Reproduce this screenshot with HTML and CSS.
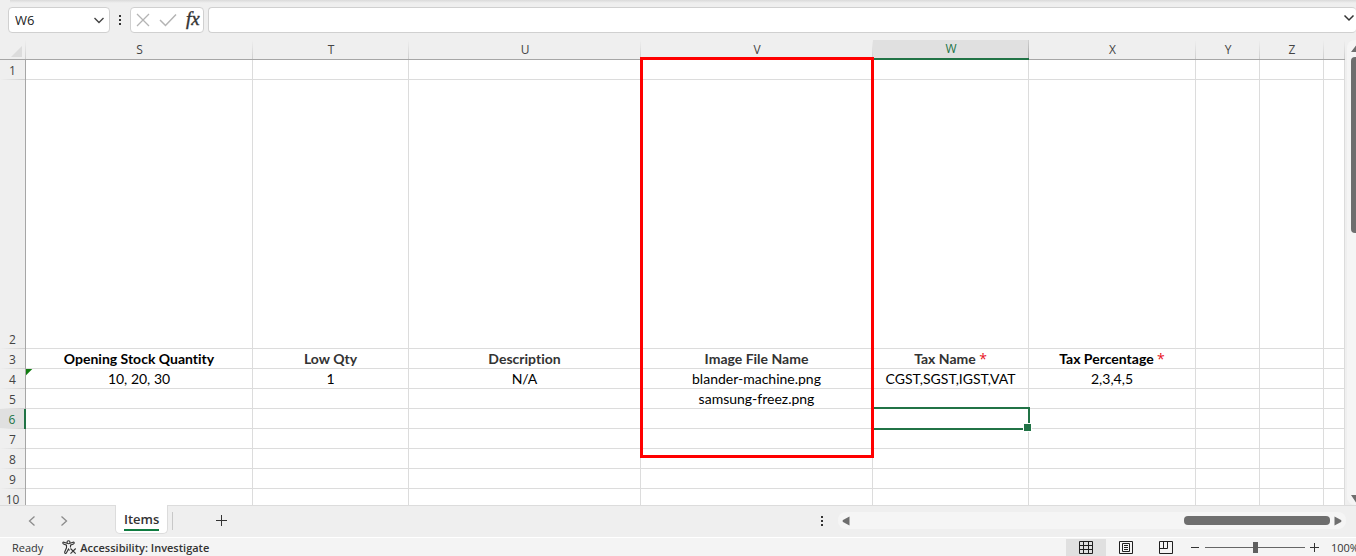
FILE: index.html
```html
<!DOCTYPE html>
<html lang="en">
<head>
<meta charset="utf-8">
<title>Items</title>
<link rel="stylesheet" href="styles.css">
</head>
<body>
<div class="app">
  <div class="ribbon-edge"></div>
  <div class="formula-bar">
    <div class="name-box">
      <input class="name-input" type="text" value="W6" aria-label="Name box">
      <button class="bare" aria-label="Show names"><svg width="12" height="8" viewBox="0 0 12 8" fill="none" stroke="#444" stroke-width="1.4"><path d="M1.500 2 6 6.500l4.500-4.500"/></svg></button>
    </div>
    <svg class="grip" width="4" height="12" viewBox="0 0 4 12" fill="#333"><path d="M1 1h2v2H1zM1 5h2v2H1zM1 9h2v2H1z"/></svg>
    <div class="entry-tools">
      <button class="bare" aria-label="Cancel"><svg width="14" height="14" viewBox="0 0 14 14" fill="none" stroke="#b4b4b4" stroke-width="1.300"><path d="M1 1l12 12M13 1 1 13"/></svg></button>
      <button class="bare" aria-label="Enter"><svg width="18" height="14" viewBox="0 0 18 14" fill="none" stroke="#b4b4b4" stroke-width="1.500"><path d="M1 7l5.500 5.500L17 1.500"/></svg></button>
      <button class="bare fx" aria-label="Insert function">fx</button>
    </div>
    <div class="formula-box">
      <input class="formula-input" type="text" aria-label="Formula bar">
      <button class="bare" aria-label="Expand formula bar"><svg width="12" height="8" viewBox="0 0 12 8" fill="none" stroke="#333" stroke-width="1.500"><path d="M1.500 1.500 6 6l4.500-4.500"/></svg></button>
    </div>
  </div>

  <div class="workspace">
    <div class="sheet">
      <table class="grid">
        <colgroup><col class="c-head"><col class="c-s"><col class="c-md"><col class="c-lg"><col class="c-lg"><col class="c-md"><col class="c-x"><col class="c-sm"><col class="c-sm"><col></colgroup>
        <thead>
          <tr>
            <th class="corner"><svg width="11" height="11" viewBox="0 0 11 11" fill="#dcdcdc"><path d="M11 0v11H0z"/></svg></th>
            <th>S</th><th>T</th><th>U</th><th class="marked">V<div class="highlight"></div></th><th class="active">W</th><th>X</th><th>Y</th><th>Z</th><th></th>
          </tr>
        </thead>
        <tbody>
          <tr><th>1</th><td></td><td></td><td></td><td></td><td></td><td></td><td></td><td></td><td></td></tr>
          <tr class="tall"><th>2</th><td></td><td></td><td></td><td></td><td></td><td></td><td></td><td></td><td></td></tr>
          <tr class="titles"><th>3</th><td class="dark">Opening Stock Quantity</td><td>Low Qty</td><td>Description</td><td>Image File Name</td><td>Tax Name <span class="req">*</span></td><td class="dark">Tax Percentage <span class="req">*</span></td><td></td><td></td><td></td></tr>
          <tr><th>4</th><td class="flagged">10, 20, 30</td><td>1</td><td>N/A</td><td>blander-machine.png</td><td>CGST,SGST,IGST,VAT</td><td>2,3,4,5</td><td></td><td></td><td></td></tr>
          <tr><th>5</th><td></td><td></td><td></td><td>samsung-freez.png</td><td></td><td></td><td></td><td></td><td></td></tr>
          <tr><th class="active">6</th><td></td><td></td><td></td><td></td><td class="selected"><div class="cursor"></div></td><td></td><td></td><td></td><td></td></tr>
          <tr><th>7</th><td></td><td></td><td></td><td></td><td></td><td></td><td></td><td></td><td></td></tr>
          <tr><th>8</th><td></td><td></td><td></td><td></td><td></td><td></td><td></td><td></td><td></td></tr>
          <tr><th>9</th><td></td><td></td><td></td><td></td><td></td><td></td><td></td><td></td><td></td></tr>
          <tr><th>10</th><td></td><td></td><td></td><td></td><td></td><td></td><td></td><td></td><td></td></tr>
        </tbody>
      </table>
    </div>
    <div class="v-scroll">
      <svg width="12" height="8" viewBox="0 0 12 8" fill="#6e6e6e"><path d="M6 0q.6 0 1 .6L12 7H0L5 .6Q5.400 0 6 0z"/></svg>
      <div class="v-thumb"></div>
      <svg width="12" height="8" viewBox="0 0 12 8" fill="#6e6e6e"><path d="M6 8q.6 0 1-.6L12 0H0l5 7.400Q5.400 8 6 8z"/></svg>
    </div>
  </div>

  <div class="tab-strip">
    <button class="bare nav" aria-label="Previous sheet"><svg width="8" height="10" viewBox="0 0 8 10" fill="none" stroke="#8c8c8c" stroke-width="1.300"><path d="M6.500.5 1.500 5l5 4.500"/></svg></button>
    <button class="bare nav" aria-label="Next sheet"><svg width="8" height="10" viewBox="0 0 8 10" fill="none" stroke="#8c8c8c" stroke-width="1.300"><path d="M1.500.5l5 4.500-5 4.500"/></svg></button>
    <button class="tab"><span class="tab-name">Items</span></button>
    <div class="divider"></div>
    <button class="bare add" aria-label="New sheet"><svg width="11" height="11" viewBox="0 0 11 11" fill="#333"><path d="M5 0h1v5h5v1H6v5H5V6H0V5h5z"/></svg></button>
    <div class="h-area">
      <svg width="4" height="12" viewBox="0 0 4 12" fill="#333"><path d="M1 1h2v2H1zM1 5h2v2H1zM1 9h2v2H1z"/></svg>
      <div class="h-scroll">
        <svg width="8" height="10" viewBox="0 0 8 10" fill="#6e6e6e"><path d="M7.500.5v9L1 6Q0 5 1 4z"/></svg>
        <div class="h-thumb"></div>
        <svg width="8" height="10" viewBox="0 0 8 10" fill="#6e6e6e"><path d="M.5.5v9L7 6q1-1 0-2z"/></svg>
      </div>
    </div>
  </div>

  <div class="status-bar">
    <span class="ready">Ready</span>
    <button class="bare access">
      <svg width="15" height="15" viewBox="0 0 15 15" fill="none" stroke="#333" stroke-width="1.100"><circle cx="6.500" cy="2.300" r="1.500"/><path d="M5 3.300 2 2.200Q.8 2 .8 3q0 .6.800 1L4.500 5.200v2.600L2.700 12q-.3 1.200.6 1.500.8.200 1.200-.7L6.500 9l1 1.500M8 3.300l3-1.100q1.200-.2 1.200.8 0 .6-.8 1L8.500 5.200v2.300M8.500 8.500l5.200 5.200M13.700 8.500l-5.200 5.200"/></svg>
      <span>Accessibility: Investigate</span>
    </button>
    <div class="view-tools">
      <button class="bare view on" aria-label="Normal"><svg width="14" height="14" viewBox="0 0 14 14" fill="none" stroke="#1f1f1f"><path d="M.5.5h13v12H.5zM4.500.5v12M9.500.5v12M.5 4.500h13M.5 8.500h13"/></svg></button>
      <button class="bare view" aria-label="Page layout"><svg width="14" height="14" viewBox="0 0 14 14" fill="none" stroke="#1f1f1f"><path d="M.5.5h13v12H.5zM3.500 2.500h7v8h-7zM5 4.500h4M5 6.500h4M5 8.500h4"/></svg></button>
      <button class="bare view" aria-label="Page break preview"><svg width="14" height="14" viewBox="0 0 14 14" fill="none" stroke="#1f1f1f"><path d="M.5.5h13v12H.5zM.5 7.500h8v-7M4.500.5v7"/></svg></button>
      <button class="bare step" aria-label="Zoom out"><svg width="9" height="9" viewBox="0 0 9 9" fill="#333"><path d="M0 4h8v1H0z"/></svg></button>
      <input class="zoom" type="range" min="10" max="190" value="100" aria-label="Zoom">
      <button class="bare step" aria-label="Zoom in"><svg width="9" height="9" viewBox="0 0 9 9" fill="#333"><path d="M4 0h1v4h4v1H5v4H4V5H0V4h4z"/></svg></button>
      <span class="percent">100%</span>
    </div>
  </div>
</div>
</body>
</html>
```
FILE: styles.css
```css
* { box-sizing: border-box; }

body {
  margin: 0;
  font: 12px/16px "Open Sans", "Noto Sans", sans-serif;
  color: #333;
  background: #efefef;
}

.app {
  display: flex;
  flex-direction: column;
  height: 100vh;
  overflow: hidden;
}

svg { display: block; flex: none; }

.bare {
  display: flex;
  align-items: center;
  justify-content: center;
  padding: 0;
  border: 0;
  background: none;
  color: inherit;
  font: inherit;
}

/* Formula bar */
.ribbon-edge {
  flex: none;
  height: 3px;
  margin-left: 10px;
  background: linear-gradient(#dadada, #efefef);
}

.formula-bar {
  display: flex;
  flex: none;
  align-items: center;
  padding: 4px 0 7px 8px;
}

.name-box,
.entry-tools,
.formula-box {
  display: flex;
  align-items: center;
  height: 26px;
  border: 1px solid #d0d0d0;
  border-radius: 4px;
  background: #fff;
}

.name-box { width: 102px; padding: 0 4px 0 6px; }

.name-input,
.formula-input {
  flex: 1;
  min-width: 0;
  padding: 0;
  border: 0;
  outline: 0;
  background: none;
  color: #222;
  font: inherit;
  font-size: 13px;
}

.grip { margin: 0 8px; }

.entry-tools { gap: 9px; width: 74px; padding: 0 5px; }

.fx {
  padding-bottom: 3px;
  font: italic 19px/20px "Liberation Serif", serif;
  -webkit-text-stroke: 0.4px #333;
}

.formula-box {
  flex: 1;
  margin-left: 4px;
  padding: 0 1px 4px 8px;
  border-right: 0;
}

/* Grid */
.workspace {
  display: flex;
  flex: 1;
  min-height: 0;
}

.sheet {
  flex: 1;
  min-width: 0;
  overflow: hidden;
}

.grid {
  width: 100%;
  table-layout: fixed;
  border-spacing: 0;
}

.c-head { width: 26px; }
.c-s { width: 227px; }
.c-md { width: 156px; }
.c-lg { width: 232px; }
.c-x { width: 167px; }
.c-sm { width: 64px; }

.grid tr { height: 20px; }
.grid .tall { height: 269px; }

.grid td {
  padding: 0;
  border-right: 1px solid #dcdcdc;
  border-bottom: 1px solid #dcdcdc;
  background: #fff;
  color: #000;
  font: 14px/19px Lato, sans-serif;
  font-variant-ligatures: none;
  text-align: center;
  white-space: nowrap;
}

.grid th {
  padding: 0;
  color: #444;
  font-weight: 400;
  line-height: 19px;
}

.grid thead th {
  border-bottom: 1px solid #a6a6a6;
  background: linear-gradient(#efefef, #cfcfcf) right / 1px 100% no-repeat #efefef;
}

.grid tbody th {
  border-right: 1px solid #a6a6a6;
  background: linear-gradient(90deg, #efefef, #cfcfcf) bottom / 100% 1px no-repeat #efefef;
  vertical-align: bottom;
}

.grid .corner svg { margin: 3px 0 0 11px; }

.grid thead .active {
  border-bottom: 2px solid #217346;
  background: linear-gradient(#d0d0d0, #a6a6a6) right / 1px 100% no-repeat #e0e0e0;
  color: #217346;
  line-height: 18px;
}

.grid tbody .active {
  border-right: 2px solid #217346;
  background-color: #e0e0e0;
  color: #217346;
}

.grid .titles td { color: #333; font-weight: 700; }
.grid .titles .dark { color: #000; }
.req { color: #e81123; font-family: "Open Sans", sans-serif; font-weight: 400; }

.grid .flagged {
  background: linear-gradient(135deg, #107c10 4px, transparent 5px) #fff;
}

.marked,
.selected { position: relative; }

.highlight {
  position: absolute;
  z-index: 2;
  top: 17px;
  left: -1px;
  right: -1px;
  height: 401px;
  border: 3px solid #f00;
}

.cursor {
  position: absolute;
  z-index: 1;
  top: -2px;
  left: -2px;
  right: -2px;
  bottom: -2px;
  border: 2px solid #217346;
}

.cursor::after {
  content: "";
  position: absolute;
  right: -4px;
  bottom: -4px;
  width: 7px;
  height: 7px;
  border: 1px solid #fff;
  background: #217346;
}

/* Scroll bars */
.v-scroll {
  display: flex;
  flex: none;
  flex-direction: column;
  width: 9px;
  margin-left: 2px;
  padding: 5px 0 2px 4px;
  border-radius: 8px 0 0 8px;
  background: #f5f5f5;
  overflow: hidden;
}

.v-thumb {
  width: 9px;
  height: 176px;
  margin: 4px 0 auto;
  border-radius: 4px;
  background: #6e6e6e;
}

.tab-strip {
  display: flex;
  flex: none;
  align-items: center;
  height: 32px;
  padding: 0 10px 2px 16px;
  border-top: 1px solid #dcdcdc;
}

.nav { width: 32px; height: 24px; }

.tab {
  align-self: flex-start;
  height: 29px;
  margin: -1px 0 0 35px;
  padding: 4px 8px 0;
  border: 1px solid #dcdcdc;
  border-top: 0;
  border-radius: 0 0 5px 5px;
  background: #fff;
  color: #333;
  font: 600 13px/16px "Open Sans", sans-serif;
}

.tab-name {
  display: block;
  height: 20px;
  border-bottom: 2px solid #107c41;
}

.divider { width: 1px; height: 18px; margin-left: 4px; background: #c8c8c8; }
.add { width: 32px; height: 24px; margin-left: 32px; }

.h-area {
  display: flex;
  align-items: center;
  width: 526px;
  margin-left: auto;
  gap: 14px;
}

.h-scroll {
  display: flex;
  flex: 1;
  align-items: center;
  height: 17px;
  padding: 0 4px;
  border-radius: 8px;
  background: #f5f5f5;
}

.h-thumb {
  width: 146px;
  height: 9px;
  margin: 0 4px 0 auto;
  border-radius: 4px;
  background: #6e6e6e;
}

/* Status bar */
.status-bar {
  display: flex;
  flex: none;
  align-items: center;
  height: 19px;
  padding: 1px 0 0 12px;
  border-top: 1px solid #fff;
  background: #f4f4f4;
  font-size: 11px;
}

.access { gap: 3px; margin-left: 19px; font-weight: 600; }

.view-tools {
  display: flex;
  flex: none;
  align-items: center;
  width: 290px;
  height: 18px;
  margin-left: auto;
  overflow: hidden;
}

.view { flex: none; width: 40px; height: 18px; }
.view.on { background: #e0e0e0; }
.step { flex: none; width: 19px; height: 18px; }

.zoom {
  flex: none;
  width: 100px;
  height: 18px;
  margin: 0;
  appearance: none;
  background: linear-gradient(#666, #666) center / 100% 1px no-repeat;
}

.zoom::-webkit-slider-thumb {
  appearance: none;
  width: 5px;
  height: 11px;
  background: #5f5f5f;
}

.percent { margin-left: 7px; }
```
